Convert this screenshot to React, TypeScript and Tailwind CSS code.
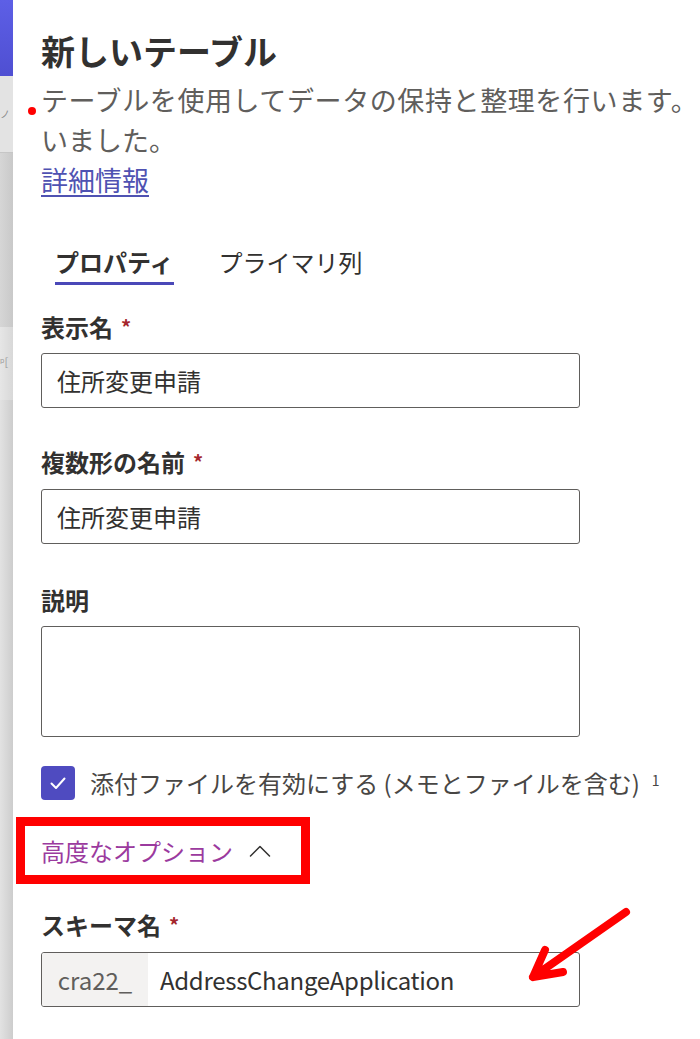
import React from 'react';

const jp = { fontFamily: '"Noto Sans CJK JP", "Noto Sans", sans-serif' };

function Label({ text, required }: { text: string; required?: boolean }) {
    return (
        <div className="flex items-center h-[32px] text-[24px] font-bold text-[#323130] leading-[32px]">
            <span>{text}</span>
            {required && <span className="ml-[8px] text-[20px] text-[#a4262c]">*</span>}
        </div>
    );
}

function TextInput({ value }: { value: string }) {
    return (
        <div className="w-[539px] h-[55px] border border-[#605e5c] rounded-[3px] flex items-center px-[15px] text-[24px] text-[#323130]">
            {value}
        </div>
    );
}

export default function App() {
    return (
        <div className="w-[700px] h-[1039px] flex overflow-hidden bg-white" style={jp}>
            {/* Background strip from the page behind the panel */}
            <div className="w-[13px] flex flex-col shrink-0">
                <div className="h-[76px] bg-gradient-to-b from-[#5d5fe6] to-[#4f4fd2]" />
                <div className="h-[77px] bg-[#e3e3e3] border-b border-[#c6c6c6] flex items-center">
                    <span className="text-[10px] leading-[10px] text-[#888]">ノ</span>
                </div>
                <div className="h-[174px] bg-gradient-to-r from-[#d6d6d6] to-[#c9c9c9]" />
                <div className="h-[73px] bg-gradient-to-r from-[#e6e6e6] to-[#d8d8d8] pt-[20px]">
                    <span className="text-[11px] leading-[12px] text-[#9a9a9a]">ᵖ[</span>
                </div>
                <div className="flex-1 bg-gradient-to-r from-[#e2e2e2] to-[#cdcdcd]" />
            </div>

            {/* Panel */}
            <div className="flex-1 relative pl-[28px] pt-[29px] overflow-hidden">
                <h1 className="text-[34px] font-bold leading-[44px] text-[#323130] whitespace-nowrap">新しいテーブル</h1>
                <div className="mt-[7px] text-[27px] leading-[40px] text-[#605e5c] whitespace-nowrap">
                    <div className="tracking-[0.6px]">テーブルを使用してデータの保持と整理を行います。</div>
                    <div>いました。</div>
                    <a className="text-[#4f52b2] underline underline-offset-[4px]">詳細情報</a>
                </div>

                {/* Tabs */}
                <div className="mt-[46px] ml-[14px] flex gap-[45px]">
                    <div className="flex flex-col">
                        <span className="text-[24px] leading-[32px] font-bold text-[#323130]">プロパティ</span>
                        <div className="mt-[4px] h-[3px] bg-[#4a48b8]" />
                    </div>
                    <span className="text-[24px] leading-[32px] text-[#323130]">プライマリ列</span>
                </div>

                <div className="mt-[26px]">
                    <Label text="表示名" required />
                </div>
                <div className="mt-[10px]">
                    <TextInput value="住所変更申請" />
                </div>

                <div className="mt-[38px]">
                    <Label text="複数形の名前" required />
                </div>
                <div className="mt-[11px]">
                    <TextInput value="住所変更申請" />
                </div>

                <div className="mt-[40px]">
                    <Label text="説明" />
                </div>
                <div className="mt-[10px] w-[539px] h-[111px] border border-[#605e5c] rounded-[3px]" />

                {/* Checkbox */}
                <div className="mt-[29px] flex items-center gap-[15px]">
                    <div className="w-[34px] h-[34px] rounded-[4px] bg-[#4f4bc0] flex items-center justify-center">
                        <svg width="20" height="20" viewBox="0 0 20 20" fill="none">
                            <path d="M3.5 10.5 L8 15 L16.5 5.5" stroke="white" strokeWidth="2" strokeLinecap="round" strokeLinejoin="round" />
                        </svg>
                    </div>
                    <span className="text-[24px] leading-[32px] text-[#484644] whitespace-nowrap">
                        添付ファイルを有効にする (メモとファイルを含む)
                        <sup className="ml-[12px] text-[14px]">1</sup>
                    </span>
                </div>

                {/* Advanced options */}
                <div className="mt-[35px] flex items-center gap-[16px] h-[32px]">
                    <span className="text-[24px] leading-[32px] text-[#9b3a9e]">高度なオプション</span>
                    <svg width="22" height="14" viewBox="0 0 22 14" fill="none">
                        <path d="M1.5 12 L11 2.5 L20.5 12" stroke="#323130" strokeWidth="1.5" strokeLinecap="round" strokeLinejoin="round" />
                    </svg>
                </div>

                <div className="mt-[42px]">
                    <Label text="スキーマ名" required />
                </div>
                <div className="mt-[11px] w-[539px] h-[55px] border border-[#605e5c] rounded-[3px] flex overflow-hidden">
                    <div className="w-[106px] bg-[#f3f2f1] flex items-center justify-center text-[24px] text-[#605e5c]">cra22_</div>
                    <div className="flex-1 flex items-center pl-[12px] text-[24px] text-[#323130] tracking-[-0.3px]">AddressChangeApplication</div>
                </div>

                {/* Annotations */}
                <div className="absolute left-[3px] top-[817px] w-[294px] h-[67px] border-[9px] border-[#ff0000]" />
                <div className="absolute left-[15px] top-[107px] w-[8px] h-[8px] rounded-full bg-[#ff0000]" />
                <svg className="absolute left-[487px] top-[890px]" width="140" height="110" viewBox="0 0 140 110" fill="none">
                    <path d="M126 22 L33 87 M45 60 L33 87 L63 82" stroke="#ff0000" strokeWidth="8" strokeLinecap="round" strokeLinejoin="round" />
                </svg>
            </div>
        </div>
    );
}
